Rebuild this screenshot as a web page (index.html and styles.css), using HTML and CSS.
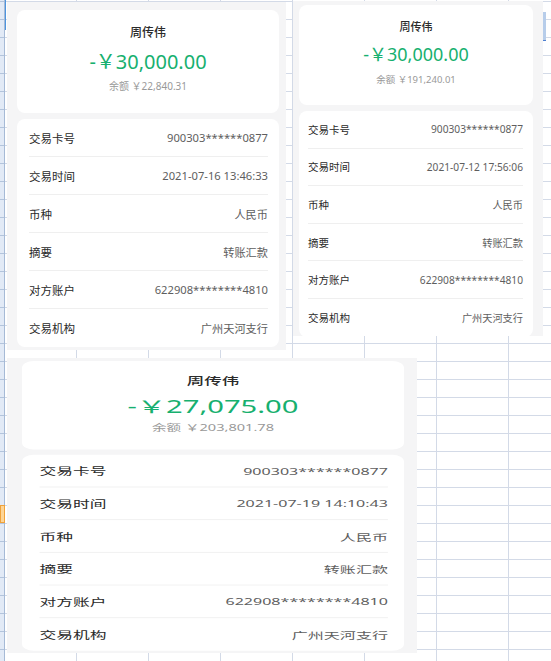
FILE: index.html
```html
<!DOCTYPE html>
<html lang="zh">
<head>
<meta charset="utf-8">
<title>交易详情</title>
<link rel="stylesheet" href="styles.css">
</head>
<body>
<div class="sheet">
  <div class="rowhead"><div class="rowsel"></div></div>
  <div class="cursor"></div>
  <div class="colmark"></div>

  <section class="win w1">
    <div class="inner">
      <div class="card head">
        <div class="name">周传伟</div>
        <div class="amt">-￥30,000.00</div>
        <div class="bal">余额 ￥22,840.31</div>
      </div>
      <div class="card list">
        <div class="row"><span class="k">交易卡号</span><span class="v">900303******0877</span></div>
        <div class="row"><span class="k">交易时间</span><span class="v">2021-07-16 13:46:33</span></div>
        <div class="row"><span class="k">币种</span><span class="v">人民币</span></div>
        <div class="row"><span class="k">摘要</span><span class="v">转账汇款</span></div>
        <div class="row"><span class="k">对方账户</span><span class="v">622908********4810</span></div>
        <div class="row"><span class="k">交易机构</span><span class="v">广州天河支行</span></div>
      </div>
    </div>
  </section>

  <section class="win w2">
    <div class="inner">
      <div class="card head">
        <div class="name">周传伟</div>
        <div class="amt">-￥30,000.00</div>
        <div class="bal">余额 ￥191,240.01</div>
      </div>
      <div class="card list">
        <div class="row"><span class="k">交易卡号</span><span class="v">900303******0877</span></div>
        <div class="row"><span class="k">交易时间</span><span class="v">2021-07-12 17:56:06</span></div>
        <div class="row"><span class="k">币种</span><span class="v">人民币</span></div>
        <div class="row"><span class="k">摘要</span><span class="v">转账汇款</span></div>
        <div class="row"><span class="k">对方账户</span><span class="v">622908********4810</span></div>
        <div class="row"><span class="k">交易机构</span><span class="v">广州天河支行</span></div>
      </div>
    </div>
  </section>

  <section class="win w3">
    <div class="inner">
      <div class="card head">
        <div class="name">周传伟</div>
        <div class="amt">-￥27,075.00</div>
        <div class="bal">余额 ￥203,801.78</div>
      </div>
      <div class="card list">
        <div class="row"><span class="k">交易卡号</span><span class="v">900303******0877</span></div>
        <div class="row"><span class="k">交易时间</span><span class="v">2021-07-19 14:10:43</span></div>
        <div class="row"><span class="k">币种</span><span class="v">人民币</span></div>
        <div class="row"><span class="k">摘要</span><span class="v">转账汇款</span></div>
        <div class="row"><span class="k">对方账户</span><span class="v">622908********4810</span></div>
        <div class="row"><span class="k">交易机构</span><span class="v">广州天河支行</span></div>
      </div>
    </div>
  </section>
</div>
</body>
</html>
```

FILE: styles.css
```css
html, body {
  margin: 0;
  padding: 0;
}
body {
  width: 551px;
  height: 661px;
  overflow: hidden;
  background: #fff;
  font-family: "Noto Sans", "Noto Sans CJK SC", sans-serif;
}

/* spreadsheet backdrop */
.sheet {
  position: relative;
  width: 551px;
  height: 661px;
  background-color: #fff;
  background-image:
    linear-gradient(to right, #d3dae7 1px, transparent 1px),
    linear-gradient(to bottom, #d3dae7 1px, transparent 1px);
  background-size: 72px 18px;
  background-position: 76px 1px;
  overflow: hidden;
}
.rowhead {
  position: absolute;
  left: 0;
  top: 0;
  width: 4px;
  height: 661px;
  background-color: #e2eaf6;
  background-image: linear-gradient(to bottom, #b3c4dc 1px, transparent 1px);
  background-size: 4px 18px;
  background-position: 0 1px;
  border-right: 1px solid #a6bad6;
}
.rowsel {
  position: absolute;
  left: 0;
  top: 505px;
  width: 5px;
  height: 18px;
  box-sizing: border-box;
  background: #fdd597;
  border: 1px solid #f0a23a;
}
.cursor {
  position: absolute;
  left: 5px;
  top: 0;
  width: 1px;
  height: 30px;
  background: #4d94de;
}
.colmark {
  position: absolute;
  left: 543px;
  top: 12px;
  width: 3px;
  height: 28px;
  background: #b7cdea;
  border-bottom: 1px solid #4d7fd0;
}

/* phone screenshots */
.win {
  position: absolute;
  background: #f5f5f6;
  overflow: hidden;
  box-sizing: border-box;
}
.card {
  background: #fff;
  border-radius: 8px;
}
.head {
  text-align: center;
  box-sizing: border-box;
  height: var(--head-h);
  padding-top: var(--head-pt);
}
.name {
  font-size: var(--fs-name);
  line-height: 18px;
  color: #2b2b2b;
  font-weight: 500;
}
.amt {
  font-size: var(--fs-amt);
  line-height: 28px;
  color: #17b06f;
  margin-top: var(--amt-mt);
}
.bal {
  font-size: var(--fs-bal);
  line-height: 14px;
  color: #999;
  margin-top: var(--bal-mt);
}
.list {
  margin-top: 6px;
  padding: 0 var(--pad-r) 0 var(--pad-l);
}
.row {
  display: flex;
  justify-content: space-between;
  align-items: center;
  height: var(--row-h);
  box-sizing: border-box;
  border-bottom: 1px solid #efefef;
}
.row:last-child {
  border-bottom: none;
}
.k {
  font-size: var(--fs-k);
  color: #2a2a2a;
}
.v {
  font-size: var(--fs-v);
  color: #5e5e5e;
}

.w1 {
  left: 7px;
  top: 2px;
  width: 279px;
  height: 348px;
  padding: 8px 0 0 10px;
  --head-h: 103px;
  --head-pt: 14px;
  --amt-mt: 6px;
  --bal-mt: 3px;
  --fs-name: 12px;
  --fs-amt: 20px;
  --fs-bal: 10px;
  --fs-k: 11.5px;
  --fs-v: 11.2px;
  --row-h: 38px;
  --pad-l: 12px;
  --pad-r: 11px;
}
.w1 .inner {
  width: 262px;
}

.w2 {
  left: 293px;
  top: 1px;
  width: 250px;
  height: 335px;
  padding: 4px 0 0 6px;
  --head-h: 100px;
  --head-pt: 13px;
  --amt-mt: 4px;
  --bal-mt: 5px;
  --fs-name: 11px;
  --fs-amt: 18px;
  --fs-bal: 9.5px;
  --fs-k: 10.5px;
  --fs-v: 10.2px;
  --row-h: 37.6px;
  --pad-l: 9px;
  --pad-r: 10px;
}
.w2 .inner {
  width: 234px;
}

.w3 {
  left: 7px;
  top: 358px;
  width: 410px;
  height: 295px;
  padding: 3px 0 0 15px;
  --head-h: 103px;
  --head-pt: 15px;
  --amt-mt: 6px;
  --bal-mt: 3px;
  --fs-name: 12px;
  --fs-amt: 20px;
  --fs-bal: 10px;
  --fs-k: 11.5px;
  --fs-v: 11px;
  --row-h: 38px;
  --pad-l: 12px;
  --pad-r: 11px;
}
.w3 .inner {
  width: 262px;
  transform: scale(1.458, 0.86);
  transform-origin: 0 0;
}
```
